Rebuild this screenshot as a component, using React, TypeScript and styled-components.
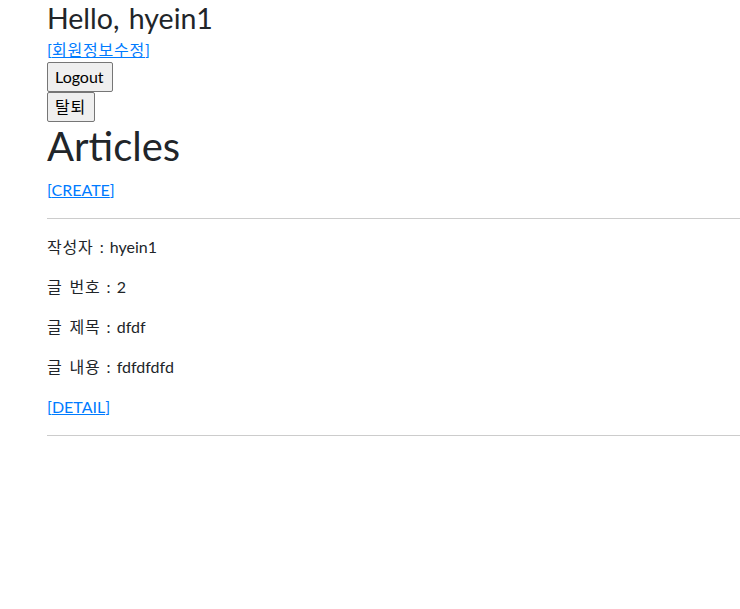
import React from "react";
import styled, { createGlobalStyle } from "styled-components";

const Global = createGlobalStyle`
  html, body { margin: 0; padding: 0; background: #fff; }
  body {
    font-family: Lato, "Noto Sans CJK KR", sans-serif;
    font-size: 16px;
    line-height: 1.5;
    color: #212529;
    word-spacing: 2px;
  }
`;

const Page = styled.div`
  padding-left: 47px;
`;

const Greeting = styled.h3`
  margin: 0;
  padding-top: 1px;
  height: 38.4px;
  box-sizing: border-box;
  font-size: 28.5px;
  font-weight: 400;
  line-height: 1.2;
`;

const LinkRow = styled.div`
  line-height: 24px;
`;

const BracketLink = styled.a`
  color: #007bff;
  text-decoration: none;
  cursor: pointer;
  span { text-decoration: underline; }
`;

const Ko = styled.span`
  letter-spacing: 0.8px;
`;

const NativeButton = styled.button`
  display: block;
  margin: 0;
  font-family: inherit;
  font-size: 16px;
  line-height: 24px;
  padding: 1px 8px 1px 7px;
  color: #000;
  background: #efefef;
  border: 1px solid #767676;
  border-radius: 2px;
  height: 30px;
`;

const Title = styled.h1`
  margin: 0 0 8px;
  font-size: 40px;
  font-weight: 400;
  line-height: 1.2;
`;

const Rule = styled.hr`
  margin: 16px 0;
  border: 0;
  border-top: 1px solid rgba(0, 0, 0, 0.2);
`;

const Field = styled.p`
  margin: 0 0 16px;
`;

const Bracketed = ({ children }: { children: React.ReactNode }) => (
  <BracketLink href="#">
    [<span>{children}</span>]
  </BracketLink>
);

const fields = [
  ["작성자", "hyein1"],
  ["글 번호", "2"],
  ["글 제목", "dfdf"],
  ["글 내용", "fdfdfdfd"],
];

export default function App() {
  return (
    <Page>
      <Global />
      <Greeting>Hello, hyein1</Greeting>
      <LinkRow>
        <Bracketed>
          <Ko>회원정보수정</Ko>
        </Bracketed>
      </LinkRow>
      <NativeButton>Logout</NativeButton>
      <NativeButton>
        <Ko>탈퇴</Ko>
      </NativeButton>
      <Title>Articles</Title>
      <LinkRow>
        <Bracketed>CREATE</Bracketed>
      </LinkRow>
      <Rule />
      {fields.map(([k, v]) => (
        <Field key={k}>
          <Ko>{k}</Ko> : {v}
        </Field>
      ))}
      <Field>
        <Bracketed>DETAIL</Bracketed>
      </Field>
      <Rule />
    </Page>
  );
}
